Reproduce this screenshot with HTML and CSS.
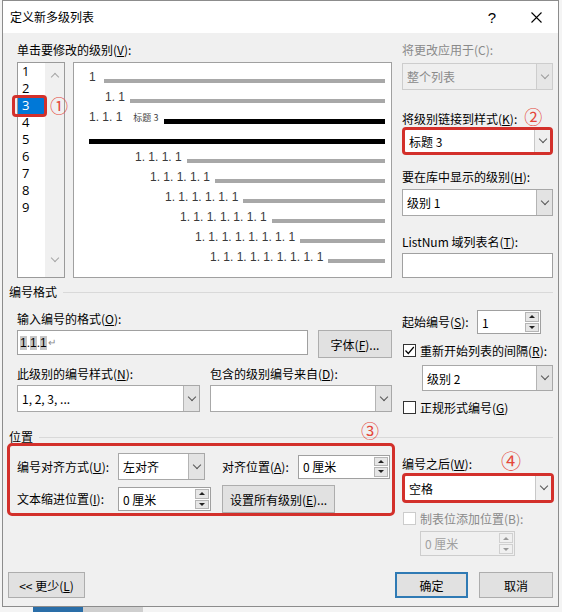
FILE: index.html
```html
<!DOCTYPE html>
<html lang="zh-CN">
<head>
  <meta charset="UTF-8">
  <title>定义新多级列表</title>
  <link rel="stylesheet" href="styles.css">
</head>
<body>

<div class="dialog">

  <div class="titlebar">
    <span class="title">定义新多级列表</span>
    <span class="tb-btn">?</span>
    <span class="tb-btn">
      <svg width="11" height="11" viewBox="0 0 11 11"><path d="M0.5 0.5 L10.5 10.5 M10.5 0.5 L0.5 10.5" stroke="#000" stroke-width="1.1"/></svg>
    </span>
  </div>

  <div class="content">

    <!-- levels + preview -->
    <div class="cols">
      <div>
        <div class="lbl">单击要修改的级别(<u>V</u>):</div>
        <div class="top-boxes">
          <div class="levels">
            <div class="level-items">
              <div class="lv">1</div>
              <div class="lv">2</div>
              <div class="lv sel">3<span class="note note-1">①</span></div>
              <div class="lv">4</div>
              <div class="lv">5</div>
              <div class="lv">6</div>
              <div class="lv">7</div>
              <div class="lv">8</div>
              <div class="lv">9</div>
            </div>
            <div class="level-scroll">
              <span class="chev up"></span>
              <span class="chev"></span>
            </div>
          </div>

          <div class="preview">
            <div class="pv-row"><span>1</span><span class="bar first"></span></div>
            <div class="pv-row in1"><span>1. 1</span><span class="bar"></span></div>
            <div class="pv-row"><span>1. 1. 1</span><span class="pv-style">标题 3</span><span class="bar bold"></span></div>
            <div class="pv-row"><span class="bar bold full"></span></div>
            <div class="pv-row in4"><span>1. 1. 1. 1</span><span class="bar"></span></div>
            <div class="pv-row in5"><span>1. 1. 1. 1. 1</span><span class="bar"></span></div>
            <div class="pv-row in6"><span>1. 1. 1. 1. 1. 1</span><span class="bar"></span></div>
            <div class="pv-row in7"><span>1. 1. 1. 1. 1. 1. 1</span><span class="bar"></span></div>
            <div class="pv-row in8"><span>1. 1. 1. 1. 1. 1. 1. 1</span><span class="bar"></span></div>
            <div class="pv-row in9"><span>1. 1. 1. 1. 1. 1. 1. 1. 1</span><span class="bar"></span></div>
          </div>
        </div>
      </div>

      <div>
        <div class="lbl dim">将更改应用于(C):</div>
        <div class="select disabled apply"><span class="val">整个列表</span><span class="drop"></span></div>

        <div class="lbl link-lbl">将级别链接到样式(<u>K</u>):<span class="note note-2">②</span></div>
        <div class="select marked link"><span class="val">标题 3</span><span class="drop"></span></div>

        <div class="lbl gallery-lbl">要在库中显示的级别(<u>H</u>):</div>
        <div class="select gallery"><span class="val">级别 1</span><span class="drop"></span></div>

        <div class="lbl listnum-lbl">ListNum 域列表名(<u>T</u>):</div>
        <div class="input listnum"></div>
      </div>
    </div>

    <!-- number format -->
    <div class="sec-head fmt-head">编号格式</div>
    <div class="cols">
      <div>
        <div class="lbl fmt-lbl">输入编号的格式(<u>O</u>):</div>
        <div class="fmt-row">
          <div class="input fmt"><span class="fld">1</span>.<span class="fld">1</span>.<span class="fld">1</span><span class="ret">↵</span></div>
          <div class="btn font-btn"><span>字体(<u>F</u>)...</span></div>
        </div>
        <div class="pair">
          <div>
            <div class="lbl">此级别的编号样式(<u>N</u>):</div>
            <div class="select style"><span class="val">1, 2, 3, ...</span><span class="drop"></span></div>
          </div>
          <div>
            <div class="lbl">包含的级别编号来自(<u>D</u>):</div>
            <div class="select style"><span class="val"></span><span class="drop"></span></div>
          </div>
        </div>
      </div>

      <div>
        <div class="start-row">
          <span class="lbl start-lbl">起始编号(<u>S</u>):</span>
          <div class="spin start"><span class="val">1</span><span class="spin-btns"><i class="up"></i><i></i></span></div>
        </div>
        <div class="chk restart">
          <span class="cb"><svg width="11" height="11" viewBox="0 0 11 11"><path d="M1.5 5.5 L4.3 8.5 L9.8 2" fill="none" stroke="#000" stroke-width="1.2"/></svg></span>
          <span>重新开始列表的间隔(<u>R</u>):</span>
        </div>
        <div class="select restart-sel"><span class="val">级别 2</span><span class="drop"></span></div>
        <div class="chk legal">
          <span class="cb"></span>
          <span>正规形式编号(<u>G</u>)</span>
        </div>
      </div>
    </div>

    <!-- position -->
    <div class="sec-head pos-head">位置</div>
    <div class="cols">
      <div class="pos-box">
        <span class="note note-3">③</span>
        <span class="lbl">编号对齐方式(<u>U</u>):</span>
        <div class="select align"><span class="val">左对齐</span><span class="drop"></span></div>
        <span class="lbl">对齐位置(<u>A</u>):</span>
        <div class="spin at"><span class="val">0 厘米</span><span class="spin-btns"><i class="up"></i><i></i></span></div>

        <span class="lbl">文本缩进位置(<u>I</u>):</span>
        <div class="spin indent"><span class="val">0 厘米</span><span class="spin-btns"><i class="up"></i><i></i></span></div>
        <div class="btn all-btn"><span>设置所有级别(<u>E</u>)...</span></div>
      </div>

      <div>
        <div class="lbl after-lbl">编号之后(<u>W</u>):<span class="note note-4">④</span></div>
        <div class="select marked after"><span class="val">空格</span><span class="drop"></span></div>
        <div class="chk tab dim">
          <span class="cb off"></span>
          <span>制表位添加位置(B):</span>
        </div>
        <div class="spin tab-at disabled"><span class="val">0 厘米</span><span class="spin-btns"><i class="up"></i><i></i></span></div>
      </div>
    </div>

  </div>

  <div class="footer">
    <div class="btn less-btn"><span>&lt;&lt; 更少(<u>L</u>)</span></div>
    <div class="btn ok-btn">确定</div>
    <div class="btn cancel-btn">取消</div>
  </div>

</div>

<div class="under"><span class="a"></span><span class="b"></span></div>

</body>
</html>
```

FILE: styles.css
```css
* {
  box-sizing: border-box;
}

body {
  margin: 0;
  background: #f4f4f4;
  font-family: "Noto Sans CJK SC", "Noto Sans", sans-serif;
  font-size: 12px;
  color: #000;
}

u {
  text-underline-offset: 1px;
}

.dialog {
  margin-left: 2px;
  width: 557px;
  height: 607px;
  border: 1px solid #8c8c8c;
  background: #f0f0f0;
  display: flex;
  flex-direction: column;
}

/* title bar */
.titlebar {
  flex: none;
  height: 32px;
  background: #fff;
  display: flex;
  align-items: center;
  padding-left: 7px;
}
.title {
  flex: 1;
  line-height: 16px;
}
.tb-btn {
  width: 44px;
  display: flex;
  justify-content: center;
  align-items: center;
  font-family: "Liberation Sans", sans-serif;
  font-size: 15px;
}

.content {
  padding: 9px 5px 0 14px;
}

.cols {
  display: grid;
  grid-template-columns: 375px 151px;
  column-gap: 10px;
  align-items: start;
}

.lbl {
  display: block;
  height: 16px;
  line-height: 16px;
  white-space: nowrap;
}
.dim {
  color: #8a8a8a;
}

/* red annotations */
.note {
  color: #e4473a;
  font-size: 18px;
  line-height: 17px;
}

/* level list */
.top-boxes {
  display: flex;
  gap: 8px;
  margin-top: 4px;
  height: 216px;
}
.levels {
  width: 48px;
  border: 1px solid #9a9a9a;
  background: #fff;
  display: flex;
  font-family: "Open Sans", "Noto Sans", sans-serif;
  font-size: 13px;
}
.level-items {
  width: 27px;
}
.lv {
  position: relative;
  height: 17px;
  line-height: 17px;
  padding-left: 4px;
}
.lv.sel {
  background: #0078d7;
  color: #fff;
}
.lv.sel::after {
  content: "";
  position: absolute;
  left: -6px;
  top: -2px;
  right: -2px;
  bottom: -3px;
  border: 3px solid #d3302b;
  border-radius: 4px;
}
.note-1 {
  position: absolute;
  left: 32px;
  top: 0;
  font-family: "Noto Sans CJK SC", sans-serif;
}
.level-scroll {
  flex: 1;
  background: #f0f0f0;
  display: flex;
  flex-direction: column;
  justify-content: space-between;
  align-items: center;
  padding: 8px 0 16px;
}
.chev {
  width: 6px;
  height: 6px;
  border-right: 1px solid #a6a6a6;
  border-bottom: 1px solid #a6a6a6;
  transform: rotate(45deg);
}
.chev.up {
  transform: rotate(-135deg);
  margin-top: 3px;
}

/* preview */
.preview {
  flex: 1;
  border: 1px solid #a0a0a0;
  background: #fff;
  padding: 4px 6px 0 15px;
  font-family: "Liberation Sans", Arial, sans-serif;
  font-size: 12px;
  color: #3a3a3a;
}
.pv-row {
  display: flex;
  align-items: center;
  height: 20px;
  white-space: nowrap;
}
.in1 { padding-left: 16px; }
.in4 { padding-left: 46px; }
.in5 { padding-left: 61px; }
.in6 { padding-left: 76px; }
.in7 { padding-left: 91px; }
.in8 { padding-left: 106px; }
.in9 { padding-left: 121px; }

.bar {
  flex: 1;
  height: 4px;
  background: #a8a8a8;
  margin: 8px 0 0 5px;
}
.bar.first {
  margin-left: 8px;
}
.bar.bold {
  height: 5px;
  background: #000;
  margin-left: 6px;
}
.bar.full {
  margin: 9px 0 0 0;
}
.pv-style {
  font-family: "Noto Sans CJK SC", sans-serif;
  font-size: 9px;
  margin-left: 11px;
  color: #444;
}

/* controls */
.select {
  display: flex;
  height: 27px;
  border: 1px solid #a8a8a8;
  background: #fff;
}
.select .val,
.spin .val {
  flex: 1;
  display: flex;
  align-items: center;
  padding-left: 4px;
  white-space: nowrap;
}
.drop {
  width: 16px;
  background: #e3e3e3;
  border-left: 1px solid #b4b4b4;
  display: flex;
  justify-content: center;
  align-items: center;
}
.drop::before {
  content: "";
  width: 5px;
  height: 5px;
  margin-top: -4px;
  border-right: 1px solid #555;
  border-bottom: 1px solid #555;
  transform: rotate(45deg);
}
.select.disabled {
  background: #efefef;
  border-color: #cdcdcd;
  color: #8a8a8a;
}
.select.disabled .drop {
  background: #e6e6e6;
  border-left-color: #cdcdcd;
}
.select.disabled .drop::before {
  border-color: #9a9a9a;
}
.select.marked {
  border: 3px solid #d3302b;
  border-radius: 4px;
}
.select.marked .drop {
  background: #efefef;
  border-left-color: #c8c8c8;
}

.input {
  height: 25px;
  border: 1px solid #a0a0a0;
  background: #fff;
}

.btn {
  height: 28px;
  border: 1px solid #adadad;
  background: #e1e1e1;
  display: flex;
  align-items: center;
  justify-content: center;
  white-space: nowrap;
}

.spin {
  display: flex;
  height: 24px;
  border: 1px solid #a0a0a0;
  background: #fff;
}
.spin-btns {
  width: 15px;
  display: flex;
  flex-direction: column;
  gap: 1px;
  padding: 1px 1px 1px 0;
}
.spin-btns i {
  flex: 1;
  background: #e6e6e6;
  border: 1px solid #b5b5b5;
  display: flex;
  justify-content: center;
  align-items: center;
}
.spin-btns i::before {
  content: "";
  border-left: 3px solid transparent;
  border-right: 3px solid transparent;
  border-top: 3px solid #222;
}
.spin-btns i.up::before {
  border-top: 0;
  border-bottom: 3px solid #222;
}
.spin.disabled {
  border-color: #cdcdcd;
  background: #f0f0f0;
  color: #a0a0a0;
}
.spin.disabled .spin-btns i {
  background: #f0f0f0;
  border-color: #d0d0d0;
}
.spin.disabled .spin-btns i::before {
  border-top-color: #9a9a9a;
  border-bottom-color: #9a9a9a;
}

.chk {
  display: flex;
  align-items: center;
  gap: 4px;
  height: 16px;
  padding-left: 1px;
  white-space: nowrap;
}
.cb {
  width: 13px;
  height: 13px;
  border: 1px solid #333;
  background: #fff;
  display: flex;
  align-items: center;
  justify-content: center;
}
.cb.off {
  border-color: #cccccc;
}

/* right column of the top part */
.apply { margin-top: 5px; }
.link-lbl { margin-top: 18px; }
.note-2 { margin-left: 7px; }
.link { margin-top: 3px; height: 28px; }
.gallery-lbl { margin-top: 14px; }
.gallery { margin-top: 4px; }
.listnum-lbl { margin-top: 18px; }
.listnum { margin-top: 3px; }

/* section headers */
.sec-head {
  display: flex;
  align-items: center;
  height: 16px;
  line-height: 16px;
  margin-left: -8px;
}
.sec-head::after {
  content: "";
  flex: 1;
  height: 1px;
  background: #d9d9d9;
  margin-left: 6px;
}
.fmt-head { margin-top: 6px; }
.pos-head { margin-top: 14px; }

/* number format */
.fmt-lbl { margin-top: 11px; }
.fmt-row {
  display: flex;
  gap: 10px;
  margin-top: 3px;
  align-items: flex-start;
}
.input.fmt {
  width: 291px;
  padding-left: 2px;
  display: flex;
  align-items: center;
  font-family: "Liberation Sans", Arial, sans-serif;
  font-size: 12px;
}
.fld {
  background: #c6c6c6;
}
.ret {
  color: #8a8a8a;
  font-size: 10px;
  margin-left: 1px;
}
.font-btn { width: 74px; }
.pair {
  display: grid;
  grid-template-columns: 183px 182px;
  column-gap: 10px;
  margin-top: 8px;
}
.select.style {
  margin-top: 3px;
}

.start-row {
  display: flex;
  align-items: center;
  margin-top: 10px;
}
.start-lbl { width: 75px; }
.spin.start { width: 64px; }
.restart { margin-top: 8px; }
.restart-sel {
  margin: 7px 0 0 20px;
  height: 26px;
}
.legal { margin-top: 8px; }

/* position */
.pos-box {
  position: relative;
  margin: -2px 0 0 -10px;
  width: 388px;
  border: 3px solid #d3302b;
  border-radius: 5px;
  padding: 7px 0 0 7px;
  display: grid;
  grid-template-columns: 101px 104px 76px 92px;
  row-gap: 5px;
  align-items: center;
}
.note-3 {
  position: absolute;
  left: 351px;
  top: -24px;
}
.select.align { width: 87px; }
.spin.at { width: 92px; }
.spin.indent { width: 93px; }
.all-btn {
  grid-column: span 2;
  width: 113px;
}

.after-lbl { margin-top: 7px; }
.note-4 {
  font-size: 20px;
  margin-left: 29px;
}
.after {
  margin-top: 5px;
  height: 30px;
  margin-right: -1px;
}
.tab { margin-top: 7px; }
.spin.tab-at {
  margin: 5px 0 0 18px;
  width: 95px;
  height: 25px;
}

/* footer */
.footer {
  margin-top: auto;
  display: flex;
  gap: 11px;
  padding: 0 5px 8px;
}
.footer .btn { height: 26px; }
.less-btn {
  width: 77px;
  margin-right: auto;
}
.ok-btn {
  width: 73px;
  border: 2px solid #2f7ab4;
}
.cancel-btn { width: 74px; }

.under {
  display: flex;
  margin-left: 33px;
  height: 5px;
}
.under .a {
  width: 50px;
  background: #2a6ea8;
}
.under .b {
  width: 60px;
  background: #cfcfcf;
}
```
